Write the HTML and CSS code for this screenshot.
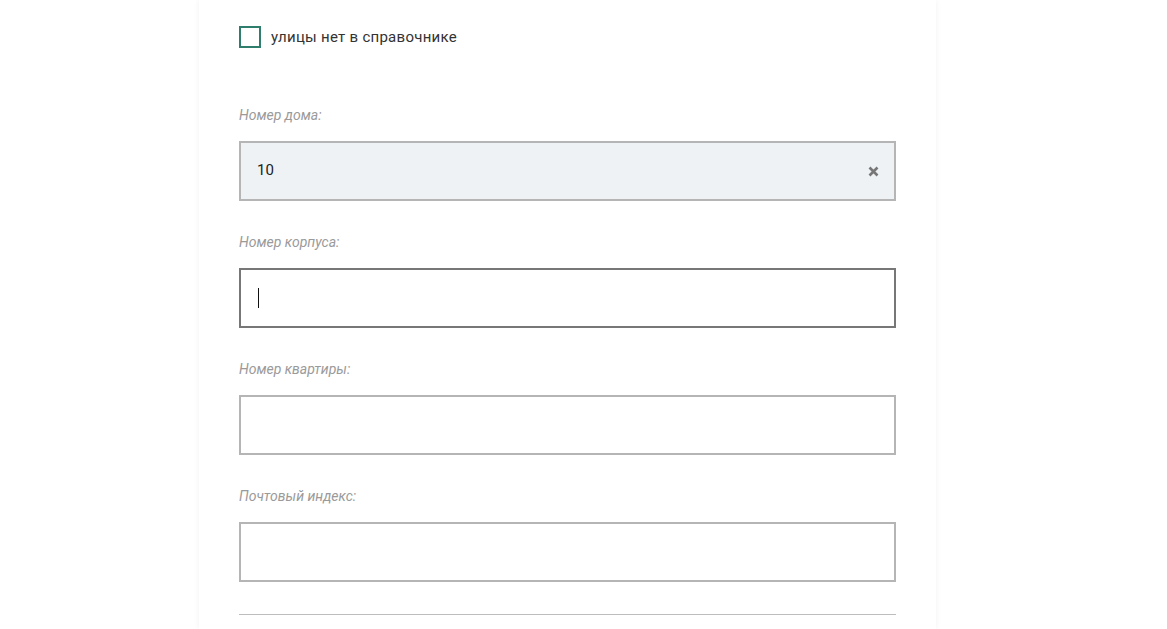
FILE: index.html
```html
<!DOCTYPE html>
<html lang="ru">
<head>
<meta charset="utf-8">
<link rel="stylesheet" href="styles.css">
</head>
<body>
<div class="page">
  <div class="card">
    <label class="check-row">
      <span class="checkbox"></span>
      <span class="check-text">улицы нет в справочнике</span>
    </label>
    <div class="fields">
      <div class="field">
        <div class="label">Номер дома:</div>
        <div class="input filled">
          <span class="value">10</span>
          <svg class="clear" width="11" height="11" viewBox="0 0 11 11"><path d="M1.5 1.5 L9.5 9.5 M9.5 1.5 L1.5 9.5" stroke="#777" stroke-width="2.6" stroke-linecap="butt"/></svg>
        </div>
      </div>
      <div class="field">
        <div class="label">Номер корпуса:</div>
        <div class="input focused"><span class="caret"></span></div>
      </div>
      <div class="field">
        <div class="label">Номер квартиры:</div>
        <div class="input"></div>
      </div>
      <div class="field">
        <div class="label">Почтовый индекс:</div>
        <div class="input"></div>
      </div>
    </div>
    <div class="divider"></div>
  </div>
</div>
</body>
</html>
```
FILE: styles.css
```css
html, body {
  margin: 0;
  padding: 0;
  background: #fff;
  font-family: Roboto, "Liberation Sans", sans-serif;
  overflow: hidden;
}
.page {
  width: 1167px;
  height: 629px;
  display: flex;
  justify-content: flex-start;
}
.card {
  margin-left: 199px;
  width: 657px;
  padding: 26px 40px 40px 40px;
  background: #fff;
  box-shadow: 0 0 6px rgba(0,0,0,0.06);
}
.check-row {
  display: flex;
  align-items: center;
  gap: 10px;
  height: 22px;
}
.checkbox {
  width: 18px;
  height: 18px;
  border: 2px solid #2f7d6c;
  box-sizing: content-box;
}
.check-text {
  font-size: 15px;
  letter-spacing: 0.27px;
  color: #333;
}
.fields {
  margin-top: 57px;
  display: flex;
  flex-direction: column;
  gap: 31px;
}
.field {
  display: flex;
  flex-direction: column;
}
.label {
  font-size: 14px;
  line-height: 20px;
  font-style: italic;
  color: #9a9a9a;
  margin-bottom: 16px;
}
.input {
  height: 60px;
  box-sizing: border-box;
  border: 2px solid #b5b5b5;
  background: #fff;
  display: flex;
  align-items: center;
  padding: 0 16px;
}
.input.filled {
  background: #eef2f5;
  justify-content: space-between;
  padding-right: 15px;
}
.input.focused {
  border-color: #777;
}
.value {
  font-size: 15px;
  color: #222;
  margin-bottom: 3px;
}
.caret {
  width: 1px;
  height: 20px;
  background: #111;
  margin-left: 1px;
}
.divider {
  margin-top: 32px;
  height: 1px;
  background: #bdbdbd;
}
```
